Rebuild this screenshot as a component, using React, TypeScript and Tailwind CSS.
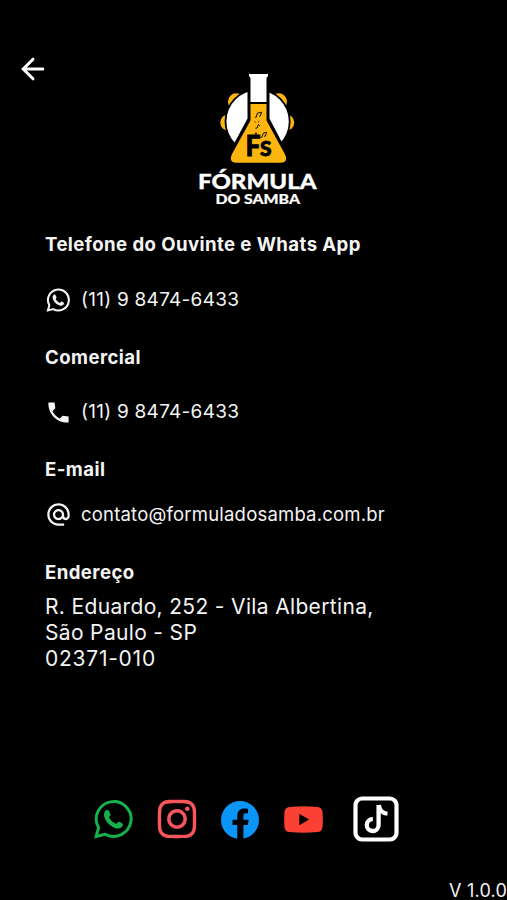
import React from 'react';
import { MdAlternateEmail } from 'react-icons/md';
import { FaInstagram } from 'react-icons/fa';

const BackArrow: React.FC = () => (
  <svg width="24" height="24" viewBox="0 0 24 24" fill="none" stroke="#fff" strokeWidth="3" strokeLinecap="round">
    <path d="M12 2.2L2.2 12L12 21.8M2.6 12H21.8" />
  </svg>
);

const PhoneIcon: React.FC = () => (
  <svg width="27" height="27" viewBox="0 0 24 24" fill="currentColor">
    <path d="M21 15.46l-5.27-.61-2.52 2.52c-2.83-1.44-5.15-3.75-6.59-6.59l2.53-2.53L8.54 3H3.03C2.45 13.18 10.82 21.55 21 20.97v-5.51z" />
  </svg>
);

const WhatsAppIcon: React.FC<{ size: number; className?: string; ring?: number }> = ({ size, className, ring = 3 }) => (
  <svg width={size} height={size} viewBox="0 0 40 40" className={className} fill="none" stroke="currentColor">
    <path
      d="M12.2 35.2L3.2 37.4L5.6 28.7A17.4 17.4 0 1 1 12.2 35.2Z"
      strokeWidth={ring}
      strokeLinejoin="miter"
    />
    <path
      d="M14.4 11C15.2 11 15.6 11.1 16 12L17.6 15.6C17.9 16.4 16.2 17.9 16 18.5C17.6 21.6 20 23.6 23.2 24.9C24 24.8 25 22.8 25.8 22.7C26.5 22.8 29.8 24.3 29.9 25.1C30 28 27.6 29.5 25 29.6C18.6 29.4 11.4 22.3 11 16C11 13.6 12.2 11 14.4 11Z"
      fill="currentColor"
      stroke="none"
    />
  </svg>
);

const FacebookIcon: React.FC = () => (
  <svg width="38" height="38" viewBox="0 0 38 38">
    <circle cx="19" cy="19" r="19" fill="#0a95f8" />
    <path d="M16.3 38V24H11.5V18.8H16.3V15C16.3 9.8 19.2 7.5 23.6 7.5C25.4 7.5 27 7.8 27 7.8V12.3H24.6C22.6 12.3 22.4 13.6 22.4 15V18.8H27.6L26.8 24H22.4V38Z" fill="#000" />
  </svg>
);

const YoutubeIcon: React.FC = () => (
  <svg width="39" height="27" viewBox="0 0 39 27">
    <path d="M5.5 0.9Q19.5 -0.3 33.5 0.9Q38 1.2 38.5 6Q39.2 13.5 38.5 21Q38 25.8 33.5 26.1Q19.5 27.2 5.5 26.1Q1 25.8 0.5 21Q-0.2 13.5 0.5 6Q1 1.2 5.5 0.9Z" fill="#fb4034" />
    <path d="M15.3 7.8L25 13.5L15.3 19.2Z" fill="#000" />
  </svg>
);

const TikTokBox: React.FC = () => (
  <svg width="46" height="46" viewBox="0 0 46 46" fill="none" stroke="#fff">
    <rect x="2.5" y="2.5" width="41" height="41" rx="6.5" strokeWidth="4.2" />
    <path d="M25.6 9V29.3A5.9 5.9 0 1 1 19.8 23.2" strokeWidth="4.3" />
    <path d="M26 9C26.5 14 29.5 17.2 34.5 17.8" strokeWidth="4" />
  </svg>
);

const Logo: React.FC = () => (
  <svg width="124" height="138" viewBox="196 70 124 138" className="block">
    {/* Tambourine */}
    <g fill="#fdb60d">
      <circle cx="236.3" cy="101.5" r="8.3" />
      <circle cx="278.7" cy="101.5" r="8.3" />
      <circle cx="228.3" cy="122.5" r="8" />
      <circle cx="286.2" cy="122.5" r="8" />
    </g>
    <circle cx="257.6" cy="121.5" r="33" fill="#000" />
    <circle cx="257.6" cy="121.5" r="31.2" fill="#fff" />
    {/* Flask */}
    <path d="M249 73V119L227 160Q227 167 235 168H282Q290 166 289 159L268 119V73Z" fill="#000" stroke="#000" strokeWidth="3" />
    <path d="M249 74H268V76L266.5 78V102H250.5V78L249 76Z" fill="#fff" />
    <path d="M250.5 104H266.5V120.5L284.8 154Q289 162.7 280 162.7H237Q228 162.7 232 154L250.5 120.5Z" fill="#fdb60d" />
    <g fill="none" stroke="#000" strokeWidth="0.9">
      <path d="M256.3 117L257.3 113.2L261.5 112.2L260.4 116M254.8 117.2H256.3M259 116.2H260.4" />
      <path d="M254 121.5L256 122.5M259 120.5L258 123" strokeOpacity="0.5" />
      <path d="M257 128L258.3 124.5L260 126M255.3 128.2H257" />
      <path d="M262 137L263.3 133.2L266.5 132.2L265.5 136M260.5 137.3H262M264 136.2H265.5" />
    </g>
    <path d="M254.5 134.5L256 132L257.2 134.5Z" />
    <g fontFamily="Lato, sans-serif" fontWeight="900" stroke="#000" strokeWidth="0.8">
      <text x="245.5" y="156" fontSize="29" textLength="15" lengthAdjust="spacingAndGlyphs">F</text>
      <text x="260" y="156" fontSize="20.5" textLength="11.5" lengthAdjust="spacingAndGlyphs">S</text>
    </g>
    <g fontFamily="Lato, sans-serif" fontWeight="900" fill="#fff" stroke="#fff">
      <text x="198" y="189.3" fontSize="21.5" strokeWidth="0.3" textLength="118.5" lengthAdjust="spacingAndGlyphs">FÓRMULA</text>
      <text x="215.5" y="204.3" fontSize="14" strokeWidth="0.2" textLength="84.5" lengthAdjust="spacingAndGlyphs">DO SAMBA</text>
    </g>
  </svg>
);

const App: React.FC = () => {
  return (
    <div className="h-[900px] w-[507px] overflow-hidden bg-black font-['Inter',sans-serif] text-[#f4f4f4] flex flex-col">
      {/* Header */}
      <header className="flex h-[208px] items-start">
        <button className="ml-[21px] mt-[57px] w-[30px]" aria-label="Voltar">
          <BackArrow />
        </button>
        <div className="ml-[145px] mt-[70px]">
          <Logo />
        </div>
      </header>

      {/* Contacts */}
      <main className="flex flex-col pl-[45px] pt-[24px]">
        <h2 className="h-[24px] text-[18.6px] leading-[24px] font-bold tracking-[0.42px]">Telefone do Ouvinte e Whats App</h2>
        <div className="mt-[31px] flex h-[27px] items-center">
          <WhatsAppIcon size={24} ring={3.4} className="ml-px -mt-px" />
          <span className="ml-[11px] text-[19px] tracking-[0.26px]">(11) 9 8474-6433</span>
        </div>

        <h2 className="mt-[31px] h-[24px] text-[18.6px] leading-[24px] font-bold tracking-[0.42px]">Comercial</h2>
        <div className="mt-[30px] flex h-[27px] items-center gap-[9px]">
          <PhoneIcon />
          <span className="text-[19px] tracking-[0.26px]">(11) 9 8474-6433</span>
        </div>

        <h2 className="mt-[31px] h-[24px] text-[18.6px] leading-[24px] font-bold tracking-[0.42px]">E-mail</h2>
        <div className="mt-[20px] flex h-[27px] items-center gap-[9px]">
          <MdAlternateEmail size={27} />
          <span className="text-[18.5px] tracking-[0.2px]">contato@formuladosamba.com.br</span>
        </div>

        <h2 className="mt-[32px] h-[24px] text-[18.6px] leading-[24px] font-bold tracking-[0.42px]">Endereço</h2>
        <p className="mt-[10px] text-[21px] leading-[26px] tracking-[0.34px]">
          R. Eduardo, 252 - Vila Albertina,
          <br />
          São Paulo - SP
          <br />
          <span className="tracking-[0.75px]">02371-010</span>
        </p>
      </main>

      {/* Social links */}
      <nav className="mt-auto flex h-[46px] items-center pl-[93px]">
        <WhatsAppIcon size={40} className="text-[#16b04d]" />
        <FaInstagram size={44} className="ml-[22px] text-[#f8565a]" />
        <div className="ml-[22px] mt-px">
          <FacebookIcon />
        </div>
        <div className="ml-[25px] mt-px">
          <YoutubeIcon />
        </div>
        <div className="ml-[30px]">
          <TikTokBox />
        </div>
      </nav>
      <footer className="mt-[38px] h-[20px] pt-px text-right text-[18px] leading-[20px] tracking-[0.2px]">V 1.0.0</footer>
    </div>
  );
};

export default App;
